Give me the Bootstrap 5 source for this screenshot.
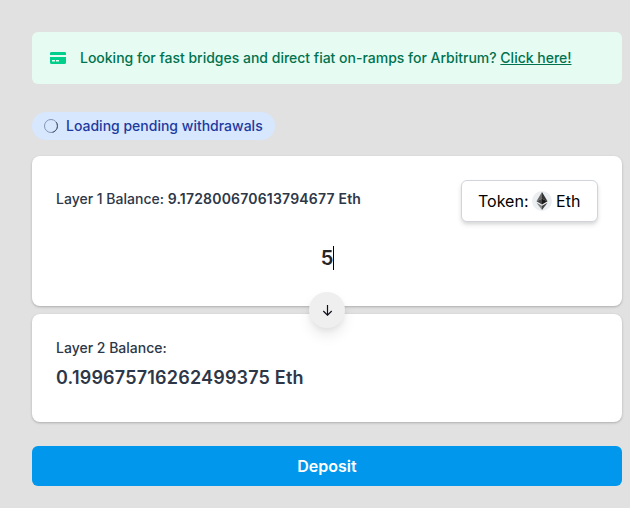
<!DOCTYPE html>
<html lang="en">
<head>
<meta charset="utf-8">
<meta name="viewport" content="width=device-width, initial-scale=1">
<title>Deposit</title>
<link href="https://cdn.jsdelivr.net/npm/bootstrap@5.3.0/dist/css/bootstrap.min.css" rel="stylesheet">
<style>
body { background: #e1e1e1; font-family: Inter, sans-serif; font-size: 14px; line-height: 20px; color: #2d3748; overflow: hidden; }
.bridge { padding: 32px 8px 22px 32px; }
.notice { background: #e6fcf2; color: #00724f; height: 52px; padding: 0 18px; border-radius: 6px; margin-bottom: 28px; letter-spacing: -.008px; }
.notice svg { margin-right: 14px; }
.notice a { color: inherit; }
.pending { background: #d6e7fe; color: #1e3a9f; height: 28px; padding: 0 12.500px 0 11px; margin-bottom: 16px; }
.pending svg { margin-right: 7px; }
.panel { background: #fff; border-radius: 8px; padding: 24px; box-shadow: 0 1px 3px rgba(0,0,0,.14), 0 1px 2px rgba(0,0,0,.1); }
.panel-from { height: 150px; margin-bottom: 8px; }
.panel-to { height: 108px; }
.fw-medium-text { font-weight: 500; }
.balance { padding-top: 9px; }
.balance span, .total { letter-spacing: .19px; }
.token { width: 137px; height: 42px; padding: 0 0 0 16px; background: #fff; border: 1px solid #d1d5db; border-radius: 6px; font-size: 16px; line-height: 24px; color: #000; box-shadow: 0 3px 5px rgba(0,0,0,.11), 0 2px 3px rgba(0,0,0,.05); }
.token svg { margin: 0 4px 0 3.600px; }
.amount { font-size: 20px; line-height: 24px; color: #262626; margin-top: 24px; padding-left: 1px; }
.caret { width: 1px; height: 24px; background: #000; }
.switcher { left: 277px; bottom: -22px; width: 36px; height: 36px; background: #efefef; z-index: 2; box-shadow: 0 8px 13px rgba(0,0,0,.08), 0 3px 5px rgba(0,0,0,.05); }
.total { font-size: 18px; line-height: 28px; margin-top: 6px; }
.deposit { height: 40px; margin-top: 24px; background: #0097ec; border-radius: 6px; font-size: 16px; line-height: 24px; color: #fff; }
</style>
</head>
<body>
<main class="bridge">
  <div class="notice d-flex align-items-center fw-medium-text">
    <svg width="16" height="12" viewBox="0 0 16 12" fill="#00cf8b"><path d="M0 3V1.200Q0 0 1.200 0h13.600Q16 0 16 1.200V3z"/><path fill-rule="evenodd" d="M0 5h16v5.500q0 1.500-1.500 1.500h-13Q0 12 0 10.500zM2 8v1.500h3V8zM6 8v1.500h3V8z"/></svg>
    <span>Looking for fast bridges and direct fiat on-ramps for Arbitrum? <a href="#">Click here!</a></span>
  </div>
  <div class="d-flex">
    <div class="pending rounded-pill d-flex align-items-center fw-medium-text">
      <svg width="16" height="16" viewBox="0 0 16 16" fill="none"><circle cx="8" cy="8" r="6.500" stroke="#8295b3"/><path d="M13.200 4.200A6.500 6.500 0 0 1 9.500 14.300" stroke="#454d61"/></svg>
      <span>Loading pending withdrawals</span>
    </div>
  </div>
  <section class="panel panel-from position-relative">
    <div class="d-flex justify-content-between">
      <div class="fw-medium-text balance">Layer 1 Balance: <span class="fw-semibold">9.172800670613794677 Eth</span></div>
      <button type="button" class="token d-flex align-items-center">Token:
        <svg width="20" height="20" viewBox="0 0 20 20"><circle cx="10" cy="10" r="10" fill="#ebeff2"/><path d="M10 1 4.500 10.300 10 7.800z" fill="#686868"/><path d="m10 1 5.500 9.300L10 7.800z" fill="#333"/><path d="M4.500 10.300 10 7.800v5.800z" fill="#444"/><path d="M15.500 10.300 10 7.800v5.800z" fill="#181818"/><path d="m4.500 11.700 5.500 3.100V19z" fill="#858585"/><path d="M15.500 11.700 10 14.800V19z" fill="#444"/></svg>
        Eth</button>
    </div>
    <div class="amount d-flex justify-content-center fw-semibold"><span>5</span><span class="caret"></span></div>
    <button type="button" class="switcher position-absolute rounded-circle border-0 p-0 d-flex align-items-center justify-content-center" aria-label="Switch direction">
      <svg width="12" height="12" viewBox="0 0 12 12" fill="none" stroke="#10101c" stroke-width="1.200"><path d="M6.500 1v10M2.300 7l4.200 4.200L10.700 7"/></svg>
    </button>
  </section>
  <section class="panel panel-to">
    <div class="fw-medium-text">Layer 2 Balance:</div>
    <div class="total fw-semibold">0.199675716262499375 Eth</div>
  </section>
  <button type="button" class="deposit w-100 border-0 p-0 d-block fw-semibold">Deposit</button>
</main>
<script src="https://cdn.jsdelivr.net/npm/bootstrap@5.3.0/dist/js/bootstrap.bundle.min.js"></script>
</body>
</html>
